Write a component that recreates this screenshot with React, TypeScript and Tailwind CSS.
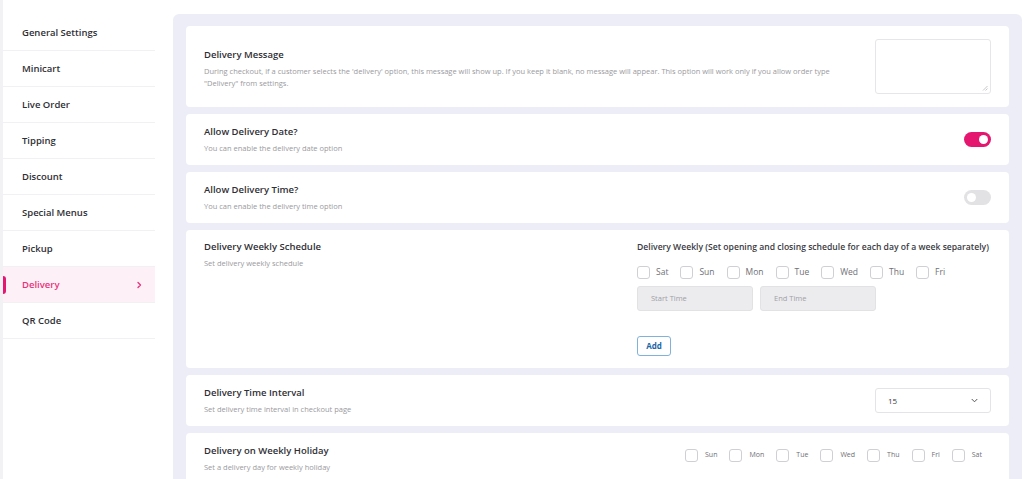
import React from "react";

const font = { fontFamily: '"Open Sans", "Noto Sans", sans-serif' };

const navItems = [
  "General Settings",
  "Minicart",
  "Live Order",
  "Tipping",
  "Discount",
  "Special Menus",
  "Pickup",
  "Delivery",
  "QR Code",
];

function Title({ children }: { children: React.ReactNode }) {
  return <div className="text-[9.5px] font-semibold text-[#2f2f36] leading-[14px]">{children}</div>;
}
function Desc({ children }: { children: React.ReactNode }) {
  return <div className="text-[7.5px] text-[#9a9aa0] leading-[12px] mt-[3px]">{children}</div>;
}

function Toggle({ on }: { on: boolean }) {
  return (
    <div
      className={`w-[27px] h-[15px] rounded-full flex items-center px-[3px] ${
        on ? "bg-[#e5166f] justify-end" : "bg-[#e2e2e4] justify-start"
      }`}
    >
      <div className="w-[9px] h-[9px] rounded-full bg-white" />
    </div>
  );
}

function Box() {
  return <div className="w-[13px] h-[13px] rounded-[3px] border border-[#cfcfd4] bg-white shrink-0" />;
}

export default function App() {
  return (
    <div style={font} className="w-[1024px] h-[479px] bg-white flex overflow-hidden">
      <aside className="w-[155px] shrink-0 border-l-[3px] border-[#f2f2f5] pt-[15px]">
        {navItems.map((n) => {
          const active = n === "Delivery";
          return (
            <div
              key={n}
              className={`relative h-[36px] flex items-center justify-between pl-[19px] pr-[12px] pt-[1px] border-b border-[#f1f1f3] text-[9.5px] font-semibold ${
                active ? "bg-[#fdf0f6] text-[#e8337c]" : "text-[#2f2f36]"
              }`}
            >
              {active && <div className="absolute left-0 top-[9px] w-[3px] h-[18px] rounded-r bg-[#e5166f]" />}
              <span>{n}</span>
              {active && (
                <svg width="8" height="8" viewBox="0 0 8 8" fill="none">
                  <path d="M3 1.5 L5.5 4 L3 6.5" stroke="#e8337c" strokeWidth="1.3" strokeLinecap="round" strokeLinejoin="round" />
                </svg>
              )}
            </div>
          );
        })}
      </aside>

      <main className="flex-1 ml-[18px] mr-[2px] mt-[14px] bg-[#ededf7] rounded-t-[6px] px-[13px] pt-[12px] flex flex-col gap-[7px]">
        {/* Delivery Message */}
        <section className="bg-white rounded-[4px] h-[81px] shrink-0 flex items-center justify-between pl-[18px] pr-[18px]">
          <div className="w-[640px] mt-[4px]">
            <Title>Delivery Message</Title>
            <Desc>
              During checkout, if a customer selects the 'delivery' option, this message will show up. If you keep it blank, no message will appear. This option will work only if you allow order type "Delivery" from settings.
            </Desc>
          </div>
          <div className="relative w-[116px] h-[55px] border border-[#e6e6ea] rounded-[3px]">
            <svg className="absolute right-[2px] bottom-[2px]" width="6" height="6" viewBox="0 0 6 6">
              <path d="M5.5 1 L1 5.5 M5.5 3.5 L3.5 5.5" stroke="#b8b8bc" strokeWidth="0.8" />
            </svg>
          </div>
        </section>

        {/* Allow Delivery Date */}
        <section className="bg-white rounded-[4px] h-[51px] shrink-0 flex items-center justify-between pl-[18px] pr-[18px]">
          <div>
            <Title>Allow Delivery Date?</Title>
            <Desc>You can enable the delivery date option</Desc>
          </div>
          <Toggle on />
        </section>

        {/* Allow Delivery Time */}
        <section className="bg-white rounded-[4px] h-[51px] shrink-0 flex items-center justify-between pl-[18px] pr-[18px]">
          <div>
            <Title>Allow Delivery Time?</Title>
            <Desc>You can enable the delivery time option</Desc>
          </div>
          <Toggle on={false} />
        </section>

        {/* Weekly schedule */}
        <section className="bg-white rounded-[4px] h-[138px] shrink-0 flex justify-between pl-[18px] pr-[18px] pt-[10px]">
          <div>
            <Title>Delivery Weekly Schedule</Title>
            <Desc>Set delivery weekly schedule</Desc>
          </div>
          <div className="w-[354px]">
            <div className="text-[8.6px] font-semibold text-[#3a3a42] leading-[14px] whitespace-nowrap">
              Delivery Weekly (Set opening and closing schedule for each day of a week separately)
            </div>
            <div className="flex items-center mt-[12px] text-[8.5px] text-[#6f6f76]">
              {["Sat", "Sun", "Mon", "Tue", "Wed", "Thu", "Fri"].map((d) => (
                <div key={d} className="flex items-center gap-[6px] mr-[12px]">
                  <Box />
                  <span>{d}</span>
                </div>
              ))}
            </div>
            <div className="flex gap-[7px] mt-[7px]">
              <div className="w-[116px] h-[25px] rounded-[3px] bg-[#ececee] border border-[#e2e2e5] flex items-center pl-[13px] text-[7.5px] text-[#a0a0a6]">
                Start Time
              </div>
              <div className="w-[116px] h-[25px] rounded-[3px] bg-[#ececee] border border-[#e2e2e5] flex items-center pl-[13px] text-[7.5px] text-[#a0a0a6]">
                End Time
              </div>
            </div>
            <button className="mt-[25px] w-[34px] h-[20px] rounded-[3px] border border-[#7fb3d9] text-[8px] font-bold text-[#2266a8] flex items-center justify-center">
              Add
            </button>
          </div>
        </section>

        {/* Time interval */}
        <section className="bg-white rounded-[4px] h-[51px] shrink-0 flex items-center justify-between pl-[18px] pr-[18px]">
          <div>
            <Title>Delivery Time Interval</Title>
            <Desc>Set delivery time interval in checkout page</Desc>
          </div>
          <div className="w-[116px] h-[25px] rounded-[3px] border border-[#e4e4e8] flex items-center justify-between pl-[12px] pr-[11px] text-[8px] text-[#3a3a42]">
            <span>15</span>
            <svg width="9" height="9" viewBox="0 0 9 9" fill="none">
              <path d="M2 3.3 L4.5 5.8 L7 3.3" stroke="#555" strokeWidth="1" strokeLinecap="round" strokeLinejoin="round" />
            </svg>
          </div>
        </section>

        {/* Weekly holiday */}
        <section className="bg-white rounded-[4px] h-[60px] shrink-0 flex items-start justify-between pl-[18px] pr-[18px] pt-[11px]">
          <div>
            <Title>Delivery on Weekly Holiday</Title>
            <Desc>Set a delivery day for weekly holiday</Desc>
          </div>
          <div className="flex items-center mt-[5px] text-[7px] text-[#6f6f76]">
            {["Sun", "Mon", "Tue", "Wed", "Thu", "Fri", "Sat"].map((d, i) => (
              <div key={d} className={`flex items-center gap-[7px] ${i < 6 ? "mr-[12px]" : "mr-[9px]"}`}>
                <Box />
                <span>{d}</span>
              </div>
            ))}
          </div>
        </section>
      </main>
    </div>
  );
}
